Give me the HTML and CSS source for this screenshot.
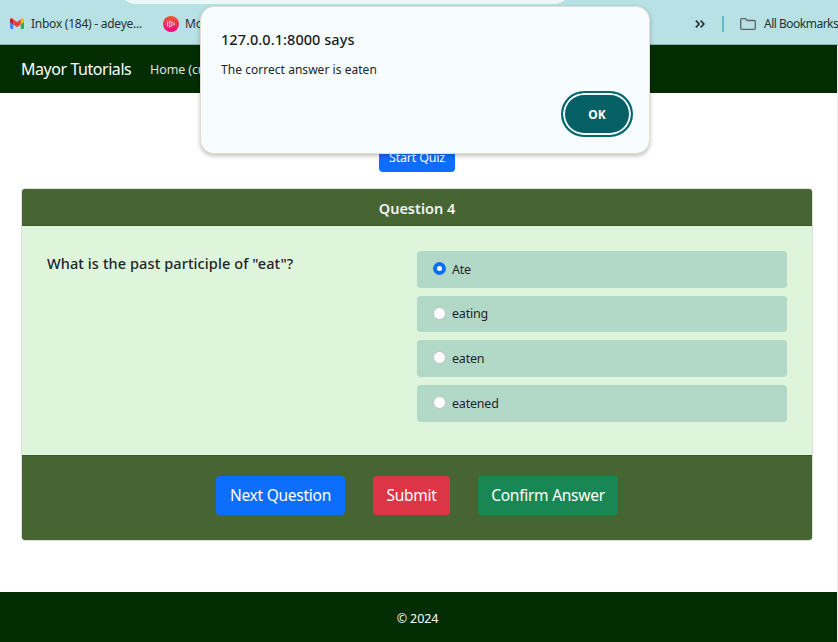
FILE: index.html
```html
<!DOCTYPE html>
<html lang="en">
<head>
<meta charset="utf-8">
<title>Mayor Tutorials</title>
<link rel="stylesheet" href="styles.css">
</head>
<body>
<div class="bookmarks">
  <div class="omnibox"></div>
  <svg class="gmail" viewBox="0 0 14 11"><path fill="#4285f4" d="M0 3h3.300v8H1a1 1 0 0 1-1-1z"/><path fill="#34a853" d="M10.700 3H14v7a1 1 0 0 1-1 1h-2.300z"/><path fill="#fbbc04" d="M10.700 1.200C12.300-.4 14 .3 14 2v2l-3.300 2.500z"/><path fill="#c5221f" d="M0 2C0 .3 1.700-.4 3.300 1.200v5.300L0 4z"/><path fill="#ea4335" d="M3.300 1.200 7 4l3.700-2.800v5.300L7 9.300 3.300 6.500z"/></svg>
  <span class="bm inbox">Inbox (184) - adeye...</span>
  <svg class="play" viewBox="0 0 16 16"><defs><linearGradient id="g" x1="0" y1="0" x2="0" y2="1"><stop offset="0" stop-color="#f05a28"/><stop offset="1" stop-color="#f8008c"/></linearGradient></defs><circle cx="8" cy="8" r="8" fill="url(#g)"/><path d="M4.500 5.500v5M6.300 4.800v6.400L12 8zM8.300 6.500v3" fill="none" stroke="#ffd5df" stroke-width=".9"/></svg>
  <span class="bm mo">Mo</span>
  <div class="right">
    <svg class="chev" viewBox="0 0 10 8"><path d="m.8.6 3.400 3.400-3.400 3.400M5.600.6 9 4 5.600 7.400" fill="none" stroke="#1b2728" stroke-width="1.500"/></svg>
    <i class="divider"></i>
    <svg class="folder" viewBox="0 0 16 12"><path d="M1.500.7h4l1.700 1.800h7.100q1 0 1 1v6.800q0 1-1 1H1.700q-1 0-1-1V1.500q0-.8.8-.8z" fill="none" stroke="#5f6364" stroke-width="1.300"/></svg>
    <span class="bm all">All Bookmarks</span>
  </div>
</div>
<div class="page">
  <nav class="navbar"><span class="brand">Mayor Tutorials</span><span class="home">Home (cu</span></nav>
  <main>
    <button class="btn start">Start Quiz</button>
    <section class="card">
      <header class="card-head"><span class="qno">Question 4</span></header>
      <div class="card-body">
        <div class="question"><span>What is the past participle of "eat"?</span></div>
        <div class="options">
          <label class="option"><i class="radio checked"></i><span>Ate</span></label>
          <label class="option"><i class="radio"></i><span>eating</span></label>
          <label class="option"><i class="radio"></i><span>eaten</span></label>
          <label class="option"><i class="radio"></i><span>eatened</span></label>
        </div>
      </div>
      <footer class="card-foot">
        <button class="btn next">Next Question</button>
        <button class="btn submit">Submit</button>
        <button class="btn confirm">Confirm Answer</button>
      </footer>
    </section>
  </main>
  <footer class="site-foot">© 2024</footer>
</div>
<div class="dialog">
  <div class="title"><span>127.0.0.1:8000 says</span></div>
  <div class="message"><span>The correct answer is eaten</span></div>
  <button class="ok">OK</button>
</div>
</body>
</html>
```
FILE: styles.css
```css
* { box-sizing: border-box; }
body { margin: 0; width: 838px; height: 642px; overflow: hidden; position: relative; background: #fff; font-family: "Noto Sans", "Open Sans", sans-serif; font-size: 12px; color: #212529; }
svg { display: block; flex: none; }
.bookmarks { position: relative; height: 45px; background: #b7e1e4; border-bottom: 1px solid #8fb0b4; display: flex; align-items: center; padding: 3px 0 0 10px; white-space: nowrap; overflow: hidden; }
.omnibox { position: absolute; left: 119px; top: -30px; width: 452px; height: 34px; border-radius: 17px; background: #ebf8f9; }
.gmail { width: 14px; height: 11px; }
.bm { font-size: 12px; color: #263234; letter-spacing: -.25px; }
.inbox { margin-left: 7px; width: 132px; }
.play { width: 16px; height: 16px; }
.mo { margin-left: 6px; width: 60px; }
.right { margin-left: auto; width: 143px; display: flex; align-items: center; flex: none; }
.chev { width: 10px; height: 8px; }
.divider { width: 2px; height: 16px; background: #5dbbc4; margin: 0 16px 0 17px; flex: none; }
.folder { width: 16px; height: 12px; }
.all { margin-left: 8px; letter-spacing: -.5px; }
.page { width: 838px; height: 597px; border-right: 1px solid #ececec; display: flex; flex-direction: column; }
.navbar { height: 48px; background: #022c02; display: flex; align-items: center; padding-left: 21px; color: #fff; white-space: nowrap; }
.brand { font-size: 16px; width: 129px; letter-spacing: -.45px; }
.home { font-size: 12.500px; color: #dfe5df; letter-spacing: -.1px; }
main { height: 499px; padding: 51px 24px 0 21px; display: flex; flex-direction: column; align-items: center; }
button { border: 0; padding: 0; font-family: inherit; color: #fff; }
.btn { border-radius: 4px; white-space: nowrap; }
.start { width: 76px; height: 28px; font-size: 12.500px; background: #0d6efd; flex: none; letter-spacing: -.2px; padding-bottom: 2px; }
.card { margin-top: 16px; width: 792px; height: 353px; border: 1px solid #dedfdc; border-radius: 4px; overflow: hidden; flex: none; }
.card-head { height: 37px; background: #476433; border-bottom: 1px solid #3b562b; color: #f1f3f0; font-weight: 600; font-size: 14.500px; display: flex; align-items: center; justify-content: center; padding-top: 1px; }
.card-body { height: 229px; background: #dff5db; display: grid; grid-template-columns: 370px 370px; padding: 25px; }
.question { font-size: 14.500px; font-weight: 500; padding-top: 2px; letter-spacing: .1px; }
.options { display: flex; flex-direction: column; gap: 8px; }
.option { height: 36.660px; flex: none; border-radius: 4px; background: #b2d9c8; display: flex; align-items: center; padding-left: 16px; font-size: 12.500px; letter-spacing: -.2px; }
.option span { margin-left: 6px; }
.radio { width: 13px; height: 13px; border-radius: 50%; background: #fff; border: 1px solid #bfbfbf; margin-top: -1.600px; }
.radio.checked { border: 4px solid #0d6efd; }
.card-foot { height: 85px; background: #476433; border-top: 1px solid #3b562b; display: flex; justify-content: center; gap: 28px; padding-top: 20px; }
.card-foot .btn { height: 39px; font-size: 15.500px; letter-spacing: -.25px; padding-bottom: 1px; }
.next { width: 129px; background: #0d6efd; }
.submit { width: 77px; background: #dc3545; }
.confirm { width: 140px; background: #198754; }
.site-foot { height: 50px; background: #022c02; color: #fff; display: flex; align-items: center; justify-content: center; font-size: 12.500px; padding: 3px 2px 0 0; letter-spacing: -.1px; }
.dialog { position: absolute; left: 200px; top: 6px; width: 450px; height: 148px; border-radius: 14px; border: 1px solid #e3dfd0; background: #f7fdff; box-shadow: 0 2px 4px rgba(0,0,0,.25); padding: 21px 16px 0 20px; display: flex; flex-direction: column; }
.title { font-size: 14.500px; font-weight: 500; line-height: 22px; color: #171d1e; letter-spacing: .05px; }
.message { font-size: 12px; line-height: 16px; margin-top: 12px; letter-spacing: .04px; }
.ok { align-self: flex-end; margin-top: 13px; width: 72px; height: 46px; border-radius: 23px; border: 2px solid #006970; background: #046065; box-shadow: inset 0 0 0 2px #f7fdff; font-size: 12px; font-weight: 700; }
```
